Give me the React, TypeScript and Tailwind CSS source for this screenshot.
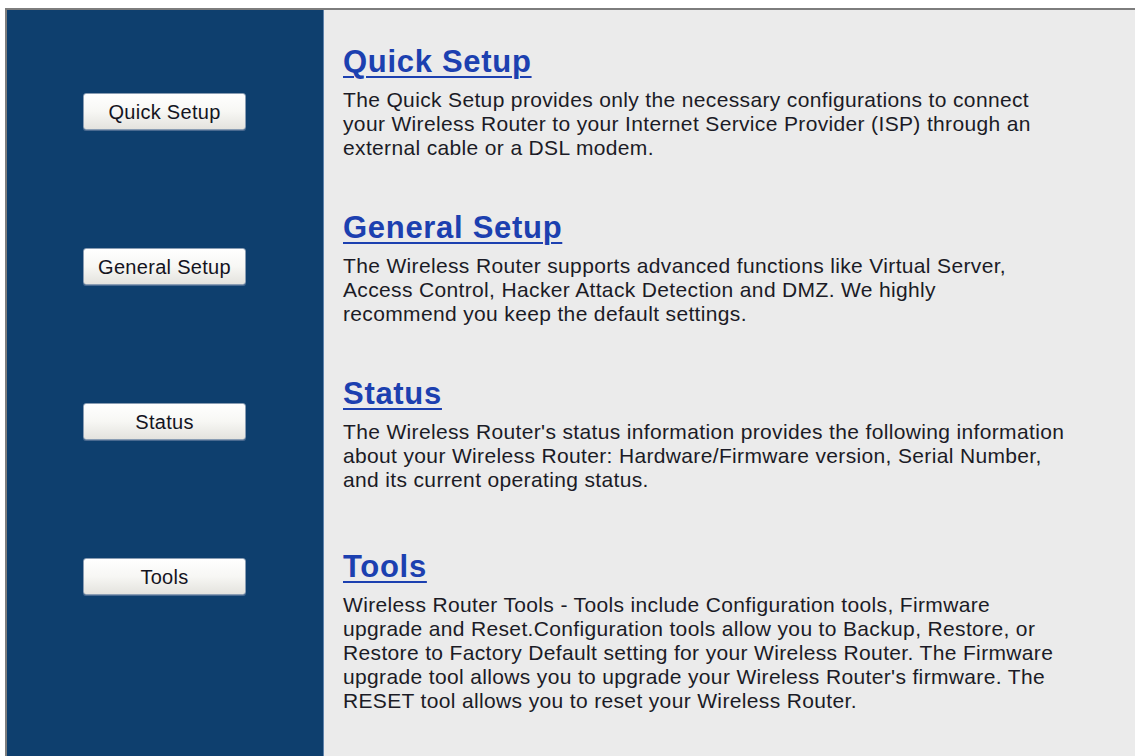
import React from "react";

const NAV = ["Quick Setup", "General Setup", "Status", "Tools"];

// Descriptions are kept line by line so they break the same way on every browser.
const SECTIONS: { title: string; lines: string[]; gap: string }[] = [
  {
    title: "Quick Setup",
    lines: [
      "The Quick Setup provides only the necessary configurations to connect",
      "your Wireless Router to your Internet Service Provider (ISP) through an",
      "external cable or a DSL modem.",
    ],
    gap: "mt-0",
  },
  {
    title: "General Setup",
    lines: [
      "The Wireless Router supports advanced functions like Virtual Server,",
      "Access Control, Hacker Attack Detection and DMZ. We highly",
      "recommend you keep the default settings.",
    ],
    gap: "mt-[50px]",
  },
  {
    title: "Status",
    lines: [
      "The Wireless Router's status information provides the following information",
      "about your Wireless Router: Hardware/Firmware version, Serial Number,",
      "and its current operating status.",
    ],
    gap: "mt-[50px]",
  },
  {
    title: "Tools",
    lines: [
      "Wireless Router Tools - Tools include Configuration tools, Firmware",
      "upgrade and Reset.Configuration tools allow you to Backup, Restore, or",
      "Restore to Factory Default setting for your Wireless Router. The Firmware",
      "upgrade tool allows you to upgrade your Wireless Router's firmware. The",
      "RESET tool allows you to reset your Wireless Router.",
    ],
    gap: "mt-[57px]",
  },
];

function NavButton({ label }: { label: string }) {
  return (
    <button
      type="button"
      className="h-[37px] w-[163px] rounded-[3px] border border-[#8a9db3] bg-gradient-to-b from-white via-[#f7f7f4] to-[#e4e3de] text-[20px] tracking-[0.3px] text-[#14141e] shadow-[0_1px_0_#4a6a90]"
    >
      {label}
    </button>
  );
}

export default function App() {
  return (
    <div
      className="h-screen overflow-hidden bg-white pl-[5px] pt-2"
      style={{ fontFamily: '"Liberation Sans", Arial, sans-serif' }}
    >
      <div className="flex h-full border-l-2 border-t-2 border-[#7d7d7d]">
        <aside className="flex w-[317px] shrink-0 flex-col items-center gap-[118px] border-r border-[#5f82aa] bg-[#0e3f6e] pt-[83px] pr-px">
          {NAV.map((n) => (
            <NavButton key={n} label={n} />
          ))}
        </aside>
        <main className="flex-1 bg-[#ebebeb] pl-[19px] pt-[34px]">
          {SECTIONS.map((s) => (
            <section key={s.title} className={s.gap}>
              <h2 className="text-[31px] font-bold leading-[36px] tracking-[0.7px] text-[#1c40b0] underline decoration-2 underline-offset-[4px]">
                {s.title}
              </h2>
              <p className="mt-2 text-[21px] leading-[24px] tracking-[0.35px] text-[#1b1b26]">
                {s.lines.map((l) => (
                  <span key={l} className="block whitespace-nowrap">
                    {l}
                  </span>
                ))}
              </p>
            </section>
          ))}
        </main>
      </div>
    </div>
  );
}
